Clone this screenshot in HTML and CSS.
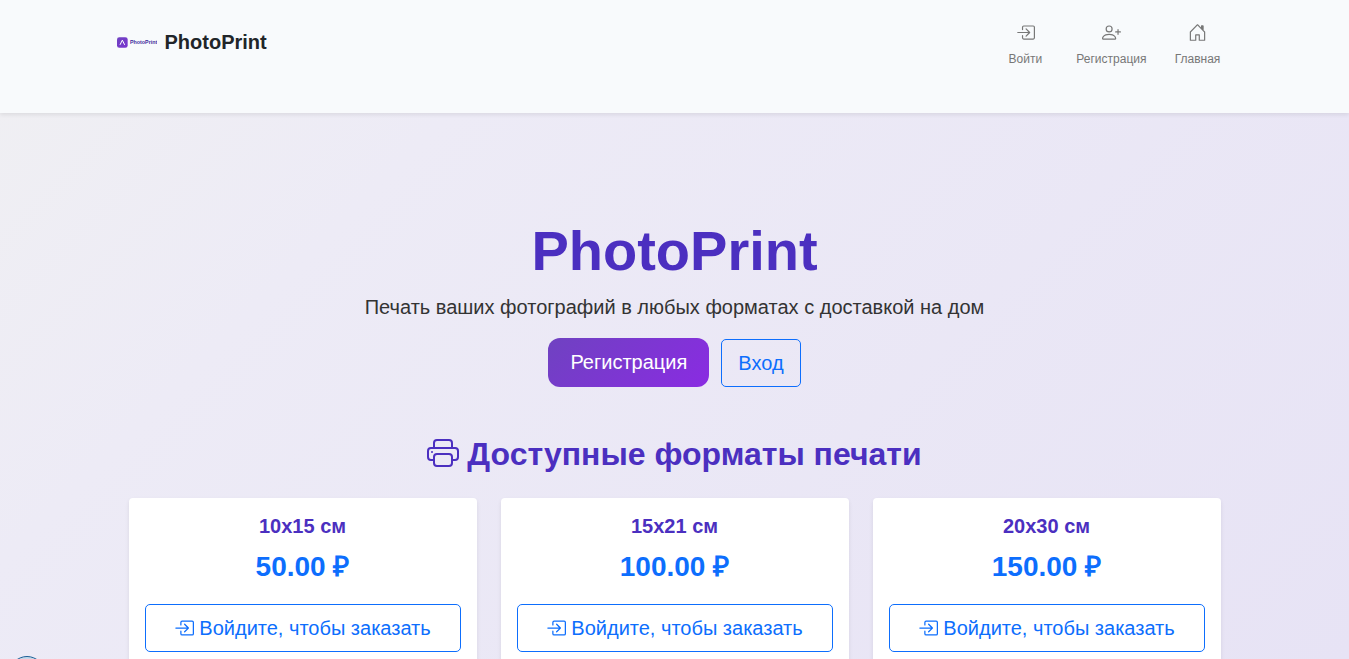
FILE: index.html
```html
<!DOCTYPE html>
<html lang="ru">
  <head>
    <meta charset="UTF-8" />
    <meta name="viewport" content="width=device-width, initial-scale=1.0" />
    <title>PhotoPrint</title>
    <link rel="stylesheet" href="styles.css">
  </head>
  <body>
    <!-- icons -->
    <svg class="sprite" aria-hidden="true">
      <symbol id="icon-login" viewBox="0 0 16 16">
        <path d="M6 3.5a.5.5 0 0 1 .5-.5h8a.5.5 0 0 1 .5.5v9a.5.5 0 0 1-.5.5h-8a.5.5 0 0 1-.5-.5v-2a.5.5 0 0 0-1 0v2A1.5 1.5 0 0 0 6.5 14h8a1.5 1.5 0 0 0 1.5-1.5v-9A1.5 1.5 0 0 0 14.5 2h-8A1.5 1.5 0 0 0 5 3.5v2a.5.5 0 0 0 1 0z" />
        <path d="M11.854 8.354a.5.5 0 0 0 0-.708l-3-3a.5.5 0 1 0-.708.708L10.293 7.5H1.5a.5.5 0 0 0 0 1h8.793l-2.147 2.146a.5.5 0 0 0 .708.708z" />
      </symbol>
      <symbol id="icon-person-plus" viewBox="0 0 16 16">
        <path d="M6 8a3 3 0 1 0 0-6 3 3 0 0 0 0 6m2-3a2 2 0 1 1-4 0 2 2 0 0 1 4 0m4 8c0 1-1 1-1 1H1s-1 0-1-1 1-4 6-4 6 3 6 4m-1-.004c-.001-.246-.154-.986-.832-1.664C9.516 10.68 8.289 10 6 10s-3.516.68-4.168 1.332c-.678.678-.83 1.418-.832 1.664z" />
        <path d="M13.5 5a.5.5 0 0 1 .5.5V7h1.5a.5.5 0 0 1 0 1H14v1.5a.5.5 0 0 1-1 0V8h-1.5a.5.5 0 0 1 0-1H13V5.5a.5.5 0 0 1 .5-.5" />
      </symbol>
      <symbol id="icon-house" viewBox="0 0 16 16">
        <path d="M8.354 1.146a.5.5 0 0 0-.708 0l-6 6A.5.5 0 0 0 1.5 7.5v7a.5.5 0 0 0 .5.5h4.5a.5.5 0 0 0 .5-.5v-4h2v4a.5.5 0 0 0 .5.5H14a.5.5 0 0 0 .5-.5v-7a.5.5 0 0 0-.146-.354L13 5.793V2.5a.5.5 0 0 0-.5-.5h-1a.5.5 0 0 0-.5.5v1.293zM2.5 14V7.707l5.5-5.5 5.5 5.5V14H10v-4a.5.5 0 0 0-.5-.5h-3a.5.5 0 0 0-.5.5v4z" />
        <path d="M11 2h2v3.800l-2-2z" />
      </symbol>
      <symbol id="icon-printer" viewBox="0 0 16 16">
        <path d="M2.5 8a.5.5 0 1 0 0-1 .5.5 0 0 0 0 1" />
        <path d="M5 1a2 2 0 0 0-2 2v2H2a2 2 0 0 0-2 2v3a2 2 0 0 0 2 2h1v1a2 2 0 0 0 2 2h6a2 2 0 0 0 2-2v-1h1a2 2 0 0 0 2-2V7a2 2 0 0 0-2-2h-1V3a2 2 0 0 0-2-2zM4 3a1 1 0 0 1 1-1h6a1 1 0 0 1 1 1v2H4zm1 5a2 2 0 0 0-2 2v1H2a1 1 0 0 1-1-1V7a1 1 0 0 1 1-1h12a1 1 0 0 1 1 1v3a1 1 0 0 1-1 1h-1v-1a2 2 0 0 0-2-2zm7 2v3a1 1 0 0 1-1 1H5a1 1 0 0 1-1-1v-3a1 1 0 0 1 1-1h6a1 1 0 0 1 1 1" />
      </symbol>
    </svg>

    <header class="header">
      <div class="container header-row">
        <a href="#" class="brand">
          <svg class="logo" viewBox="0 0 120 32" aria-hidden="true">
            <defs>
              <linearGradient id="logoFill" x1="0" y1="0" x2="1" y2="1">
                <stop offset="0" stop-color="#6f42c1" />
                <stop offset="1" stop-color="#7a35cf" />
              </linearGradient>
            </defs>
            <rect x="0" width="32" height="32" rx="7" fill="url(#logoFill)" />
            <path d="M9 23l7-14 7 14" fill="none" stroke="#fff" stroke-width="3" />
            <text x="39" y="20" class="logo-text">PhotoPrint</text>
          </svg>
          <span>PhotoPrint</span>
        </a>
        <nav class="nav">
          <a href="#" class="nav-link"><svg class="nav-icon"><use href="#icon-login" /></svg>Войти</a>
          <a href="#" class="nav-link"><svg class="nav-icon"><use href="#icon-person-plus" /></svg>Регистрация</a>
          <a href="#" class="nav-link"><svg class="nav-icon"><use href="#icon-house" /></svg>Главная</a>
        </nav>
      </div>
    </header>

    <main class="container main">
      <section class="hero">
        <h1>PhotoPrint</h1>
        <p class="lead">Печать ваших фотографий в любых форматах с доставкой на дом</p>
        <div class="actions">
          <a href="#" class="btn btn-primary">Регистрация</a>
          <a href="#" class="btn btn-outline">Вход</a>
        </div>
      </section>

      <section class="formats">
        <h2><svg class="title-icon"><use href="#icon-printer" /></svg>Доступные форматы печати</h2>
        <div class="cards">
          <div class="card">
            <h3>10x15 см</h3>
            <p class="price">50.00 ₽</p>
            <a href="#" class="btn btn-outline"><svg class="btn-icon"><use href="#icon-login" /></svg>Войдите, чтобы заказать</a>
          </div>
          <div class="card">
            <h3>15x21 см</h3>
            <p class="price">100.00 ₽</p>
            <a href="#" class="btn btn-outline"><svg class="btn-icon"><use href="#icon-login" /></svg>Войдите, чтобы заказать</a>
          </div>
          <div class="card">
            <h3>20x30 см</h3>
            <p class="price">150.00 ₽</p>
            <a href="#" class="btn btn-outline"><svg class="btn-icon"><use href="#icon-login" /></svg>Войдите, чтобы заказать</a>
          </div>
        </div>
      </section>
    </main>

    <span class="bubble"></span>
  </body>
</html>
```
FILE: styles.css
```css
* {
  box-sizing: border-box;
}
body {
  margin: 0;
  min-height: 100vh;
  font-family: "Liberation Sans", Arial, sans-serif;
  font-size: 16px;
  line-height: 24px;
  color: #333;
  background: linear-gradient(135deg, #f0f0f2 0%, #edebf6 28%, #e7e3f5 100%) fixed;
}
h1, h2, h3, p {
  margin: 0;
}
h1, h2, h3 {
  color: #4b2fc0;
}
a {
  text-decoration: none;
}
svg {
  fill: currentColor;
}
.sprite {
  display: none;
}
.container {
  max-width: 1140px;
  margin: 0 auto;
  padding: 0 12px;
}

/* header */
.header {
  position: relative;
  padding: 16px 0 39px;
  background: #f8fafc;
  box-shadow: 0 2px 4px rgba(0, 0, 0, 0.08);
}
.header-row {
  display: flex;
  justify-content: space-between;
  align-items: flex-start;
}
.brand {
  display: flex;
  align-items: center;
  gap: 8px;
  height: 52px;
  font-size: 20px;
  font-weight: bold;
  color: #212529;
}
.logo {
  width: 40px;
  height: 11px;
}
.logo-text {
  font-size: 16px;
  font-weight: bold;
  fill: #3f2a9c;
}
.nav {
  display: flex;
  gap: 4px;
}
.nav-link {
  display: flex;
  flex-direction: column;
  align-items: center;
  gap: 9px;
  min-width: 70px;
  padding: 7px 12px;
  font-size: 12px;
  line-height: 16px;
  color: #777;
}
.nav-icon {
  width: 19px;
  height: 19px;
}

/* hero */
.main {
  padding: 104px 24px 48px;
}
.hero {
  text-align: center;
}
.hero h1 {
  font-size: 56px;
  line-height: 67px;
}
.lead {
  margin-top: 8px;
  font-size: 20px;
  line-height: 30px;
}
.actions {
  display: flex;
  justify-content: center;
  align-items: center;
  gap: 12px;
  margin-top: 16px;
}
.btn {
  display: flex;
  align-items: center;
  justify-content: center;
  gap: 5px;
  padding: 8px 16px;
  font-size: 20px;
  line-height: 30px;
  border: 1px solid transparent;
}
.btn-primary {
  padding: 9px 22px;
  border: 0;
  line-height: 31px;
  color: #fff;
  border-radius: 12px;
  background: linear-gradient(135deg, #6f42c1, #8a2be2);
}
.btn-outline {
  color: #0d6efd;
  border-color: #0d6efd;
  border-radius: 5px;
}

/* formats */
.formats {
  margin-top: 48px;
}
.formats h2 {
  display: flex;
  justify-content: center;
  align-items: center;
  gap: 8px;
  font-size: 32px;
  line-height: 38px;
}
.title-icon {
  width: 32px;
  height: 32px;
  margin-bottom: 2px;
}
.cards {
  display: grid;
  grid-template-columns: repeat(3, 1fr);
  gap: 24px;
  margin-top: 25px;
}
.card {
  padding: 16px;
  text-align: center;
  background: #fff;
  border-radius: 4px;
  box-shadow: 0 2px 4px rgba(0, 0, 0, 0.08);
}
.card h3 {
  font-size: 20px;
  line-height: 24px;
}
.price {
  margin: 8px 0 16px;
  font-size: 28px;
  line-height: 42px;
  font-weight: bold;
  color: #0d6efd;
}
.btn-icon {
  width: 20px;
  height: 20px;
}

/* round badge peeking out of the corner */
.bubble {
  position: fixed;
  left: 9px;
  bottom: -33px;
  width: 36px;
  height: 36px;
  border: 1px solid #1d5f96;
  border-radius: 50%;
  background: #c5d9ea;
}
```
